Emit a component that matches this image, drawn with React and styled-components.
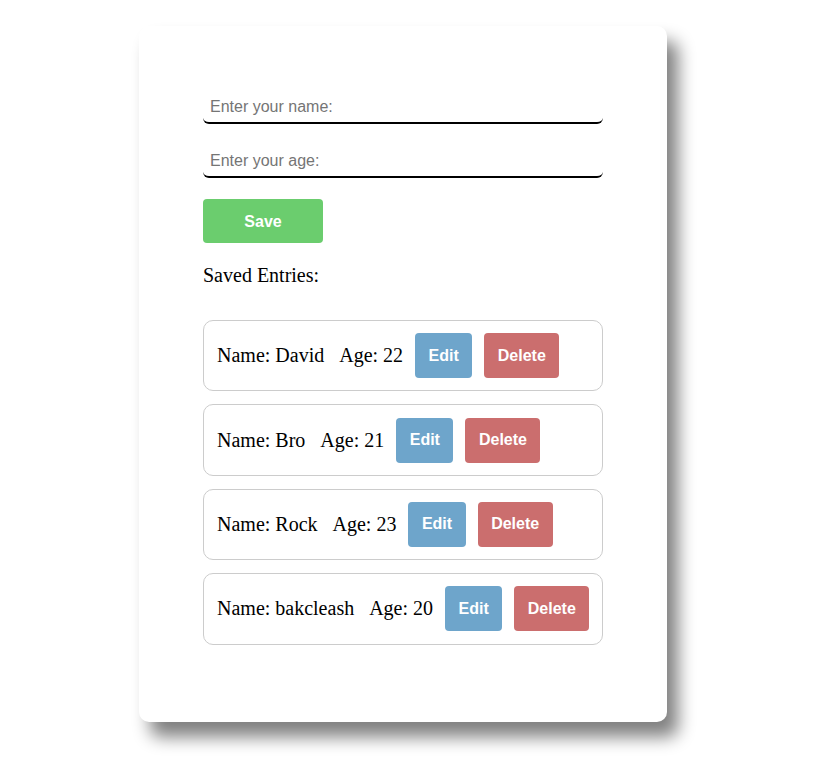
import React, { useState } from 'react'
import styled, { createGlobalStyle } from 'styled-components'

const GlobalStyle = createGlobalStyle`
  body {
    margin: 0;
    background: #fff;
    font-family: "Liberation Serif", "Times New Roman", serif;
  }
`

const Page = styled.div`
  padding: 26px 0 40px 139px;
`

const Card = styled.div`
  width: 528px;
  height: 696px;
  box-sizing: border-box;
  padding: 64px 64px 0 64px;
  background: #fff;
  border-radius: 10px;
  box-shadow: 11px 15px 17px #808080;
  display: flex;
  flex-direction: column;
`

const Input = styled.input`
  width: 400px;
  height: 34px;
  box-sizing: border-box;
  padding: 1px 7px 0;
  border: none;
  border-bottom: 2px solid #000;
  border-radius: 6px;
  font-family: "Liberation Sans", Arial, sans-serif;
  font-size: 16px;
  outline: none;
  margin-bottom: ${p => p.$gap}px;
  &::placeholder {
    color: #757575;
  }
`

const Button = styled.button`
  border: none;
  border-radius: 4px;
  color: #fff;
  font-family: "Liberation Sans", Arial, sans-serif;
  font-weight: bold;
  font-size: 16px;
  cursor: pointer;
  background: ${p => p.$bg};
`

const SaveButton = styled(Button)`
  width: 120px;
  height: 44px;
  padding-top: 2px;
`

const Heading = styled.div`
  margin-top: 21px;
  font-size: 20px;
  line-height: 23px;
`

const List = styled.div`
  margin-top: 33px;
  display: flex;
  flex-direction: column;
  gap: 13px;
`

const Entry = styled.div`
  width: 400px;
  min-height: 71.4px;
  box-sizing: border-box;
  padding: 12px 0 12px 13px;
  border: 1px solid #ccc;
  border-radius: 10px;
  display: flex;
  align-items: center;
  font-size: 20px;
  white-space: nowrap;
  flex-shrink: 0;
`

const Age = styled.span`
  margin-left: 15px;
`

const RowButton = styled(Button)`
  height: 45px;
  padding: 0 13.5px;
  margin-left: 12px;
  flex-shrink: 0;
`

const initial = [
  { name: 'David', age: 22 },
  { name: 'Bro', age: 21 },
  { name: 'Rock', age: 23 },
  { name: 'bakcleash', age: 20 },
]

export default function App() {
  const [entries] = useState(initial)
  return (
    <Page>
      <GlobalStyle />
      <Card>
        <Input $gap={20} placeholder="Enter your name:" />
        <Input $gap={21} placeholder="Enter your age:" />
        <div>
          <SaveButton $bg="#6bcd6e">Save</SaveButton>
        </div>
        <Heading>Saved Entries:</Heading>
        <List>
          {entries.map(e => (
            <Entry key={e.name}>
              <span>Name: {e.name}</span>
              <Age>Age: {e.age}</Age>
              <RowButton $bg="#6ea5cb">Edit</RowButton>
              <RowButton $bg="#cb6e6e">Delete</RowButton>
            </Entry>
          ))}
        </List>
      </Card>
    </Page>
  )
}
